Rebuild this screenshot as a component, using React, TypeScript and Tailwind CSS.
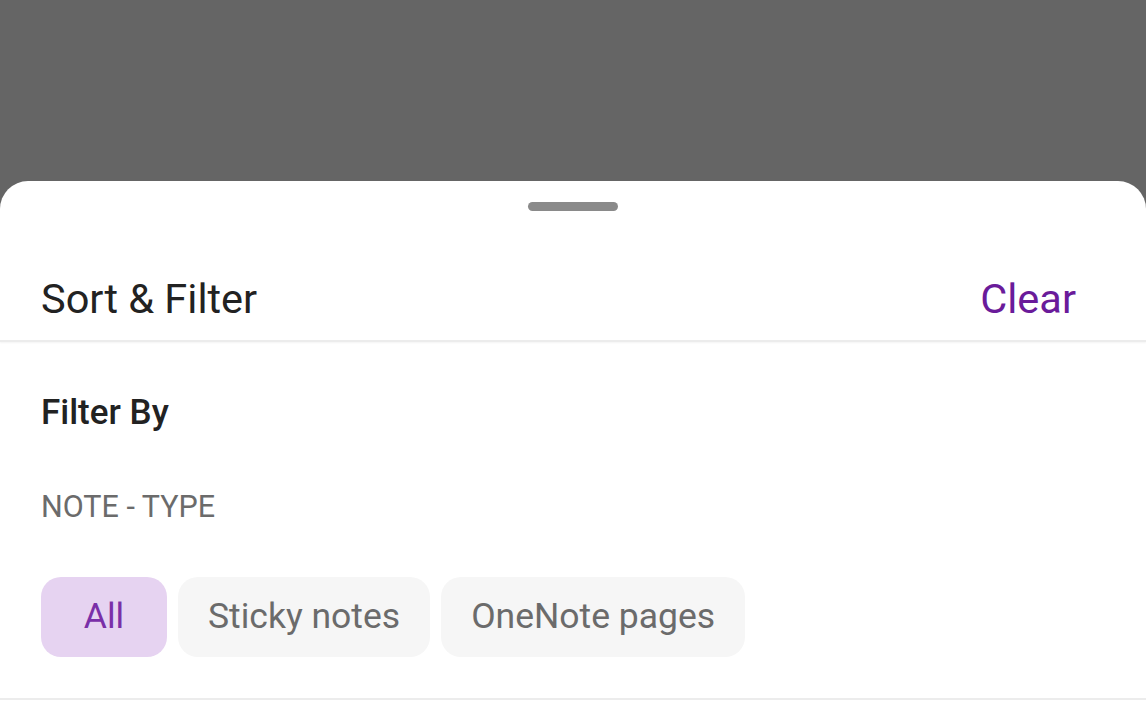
const chips = [
  { label: "All", active: true },
  { label: "Sticky notes", active: false },
  { label: "OneNote pages", active: false },
];

export default function App() {
  return (
    <div className="flex h-[716px] w-full flex-col overflow-hidden bg-[#656565] pt-[181px] font-['Roboto',sans-serif]">
      <div className="flex flex-1 flex-col rounded-t-[28px] bg-white">
        <div className="mx-auto mt-[21px] h-[9px] w-[90px] rounded-full bg-[#8a8a8a]" />

        <div className="flex items-center justify-between px-[41px] pb-[17px] pt-[64px]">
          <h1 className="text-[41.5px] leading-[48px] text-[#222]">Sort &amp; Filter</h1>
          <button className="mr-[29px] text-[41.5px] leading-[48px] text-[#6a1b9a]">Clear</button>
        </div>
        <div className="h-[2px] bg-[#ececec] shadow-[0_1px_2px_rgba(0,0,0,0.05)]" />

        <div className="px-[41px] pt-[50px]">
          <h2 className="text-[35px] font-medium leading-[42px] text-[#222]">Filter By</h2>
          <p className="mt-[55px] text-[30.5px] leading-[36px] text-[#6b6b6b]">NOTE - TYPE</p>
          <div className="mt-[52px] flex gap-[11px]">
            {chips.map((c) => (
              <button
                key={c.label}
                className={
                  c.active
                    ? "flex h-[80px] min-w-[126px] items-center justify-center rounded-[20px] bg-[#e6d3f1] px-[30px] text-[35.5px] text-[#7a2fa8]"
                    : "flex h-[80px] items-center justify-center rounded-[20px] bg-[#f6f6f6] px-[30px] text-[35.5px] text-[#6b6b6b]"
                }
              >
                {c.label}
              </button>
            ))}
          </div>
        </div>
        <div className="mt-[41px] h-[2px] bg-[#ececec]" />
      </div>
    </div>
  );
}
